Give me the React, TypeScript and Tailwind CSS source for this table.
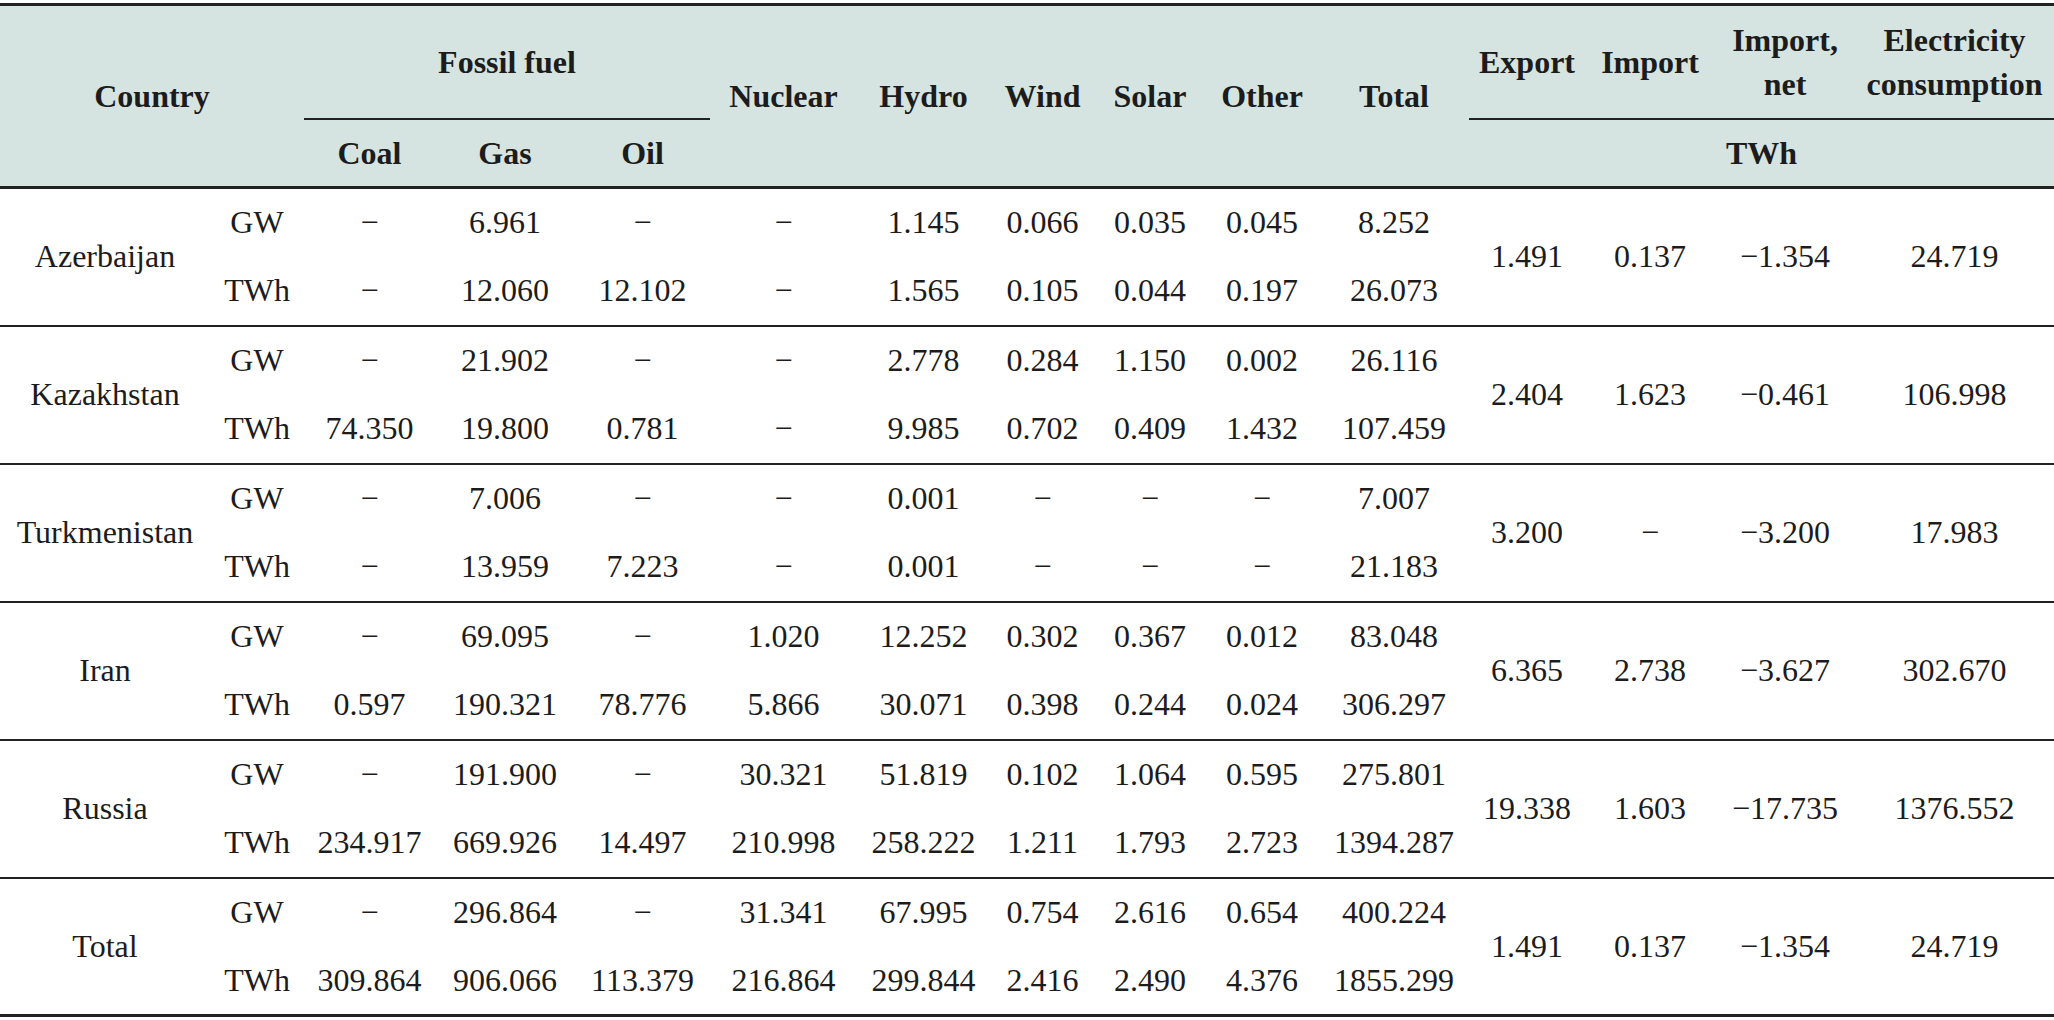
import React from "react";

const cols = [210, 94, 131, 140, 135, 147, 133, 105, 110, 114, 150, 116, 130, 140, 199];

const M = "\u2212";

type Row = {
  name: string;
  gw: string[];
  twh: string[];
  right: string[];
};

const rows: Row[] = [
  {
    name: "Azerbaijan",
    gw: [M, "6.961", M, M, "1.145", "0.066", "0.035", "0.045", "8.252"],
    twh: [M, "12.060", "12.102", M, "1.565", "0.105", "0.044", "0.197", "26.073"],
    right: ["1.491", "0.137", M + "1.354", "24.719"],
  },
  {
    name: "Kazakhstan",
    gw: [M, "21.902", M, M, "2.778", "0.284", "1.150", "0.002", "26.116"],
    twh: ["74.350", "19.800", "0.781", M, "9.985", "0.702", "0.409", "1.432", "107.459"],
    right: ["2.404", "1.623", M + "0.461", "106.998"],
  },
  {
    name: "Turkmenistan",
    gw: [M, "7.006", M, M, "0.001", M, M, M, "7.007"],
    twh: [M, "13.959", "7.223", M, "0.001", M, M, M, "21.183"],
    right: ["3.200", M, M + "3.200", "17.983"],
  },
  {
    name: "Iran",
    gw: [M, "69.095", M, "1.020", "12.252", "0.302", "0.367", "0.012", "83.048"],
    twh: ["0.597", "190.321", "78.776", "5.866", "30.071", "0.398", "0.244", "0.024", "306.297"],
    right: ["6.365", "2.738", M + "3.627", "302.670"],
  },
  {
    name: "Russia",
    gw: [M, "191.900", M, "30.321", "51.819", "0.102", "1.064", "0.595", "275.801"],
    twh: ["234.917", "669.926", "14.497", "210.998", "258.222", "1.211", "1.793", "2.723", "1394.287"],
    right: ["19.338", "1.603", M + "17.735", "1376.552"],
  },
  {
    name: "Total",
    gw: [M, "296.864", M, "31.341", "67.995", "0.754", "2.616", "0.654", "400.224"],
    twh: ["309.864", "906.066", "113.379", "216.864", "299.844", "2.416", "2.490", "4.376", "1855.299"],
    right: ["1.491", "0.137", M + "1.354", "24.719"],
  },
];

export default function App() {
  return (
    <div className="w-[2054px] h-[1020px] bg-white pt-[3px] overflow-hidden font-['Liberation_Serif','Times_New_Roman',serif] text-[#1c1c1c]">
      <table className="table-fixed w-[2054px] border-collapse text-[32px] leading-[35px]">
        <colgroup>
          {cols.map((w, i) => (
            <col key={i} style={{ width: w }} />
          ))}
        </colgroup>
        <thead className="bg-[#d6e4e1] font-bold leading-[44px]">
          <tr className="h-[114px] border-t-[3px] border-[#222]">
            <th rowSpan={2} colSpan={2} className="p-0 text-center align-middle">
              Country
            </th>
            <th colSpan={3} className="p-0 text-center align-middle border-b-2 border-[#222]">
              Fossil fuel
            </th>
            <th rowSpan={2} className="p-0 text-center align-middle">Nuclear</th>
            <th rowSpan={2} className="p-0 text-center align-middle">Hydro</th>
            <th rowSpan={2} className="p-0 text-center align-middle">Wind</th>
            <th rowSpan={2} className="p-0 text-center align-middle">Solar</th>
            <th rowSpan={2} className="p-0 text-center align-middle">Other</th>
            <th rowSpan={2} className="p-0 text-center align-middle">Total</th>
            <th className="p-0 text-center align-middle border-b-2 border-[#222]">Export</th>
            <th className="p-0 text-center align-middle border-b-2 border-[#222]">Import</th>
            <th className="p-0 text-center align-middle border-b-2 border-[#222]">
              Import,
              <br />
              net
            </th>
            <th className="p-0 text-center align-middle border-b-2 border-[#222]">
              Electricity
              <br />
              consumption
            </th>
          </tr>
          <tr className="h-[69px] border-b-[3px] border-[#222]">
            <th className="p-0 text-center align-middle">Coal</th>
            <th className="p-0 text-center align-middle">Gas</th>
            <th className="p-0 text-center align-middle">Oil</th>
            <th colSpan={4} className="p-0 text-center align-middle">TWh</th>
          </tr>
        </thead>
        <tbody className="font-normal">
          {rows.map((r, ri) => {
            const last = ri === rows.length - 1;
            return (
              <React.Fragment key={r.name}>
                <tr className="h-[69px]">
                  <td rowSpan={2} className="p-0 text-center align-middle">
                    {r.name}
                  </td>
                  <td className="p-0 text-center align-middle">GW</td>
                  {r.gw.map((v, i) => (
                    <td key={i} className="p-0 text-center align-middle">
                      {v}
                    </td>
                  ))}
                  {r.right.map((v, i) => (
                    <td key={"r" + i} rowSpan={2} className="p-0 text-center align-middle">
                      {v}
                    </td>
                  ))}
                </tr>
                <tr
                  className={
                    last
                      ? "h-[69px] border-b-[3px] border-[#222]"
                      : "h-[69px] border-b-2 border-[#222]"
                  }
                >
                  <td className="p-0 text-center align-middle">TWh</td>
                  {r.twh.map((v, i) => (
                    <td key={i} className="p-0 text-center align-middle">
                      {v}
                    </td>
                  ))}
                </tr>
              </React.Fragment>
            );
          })}
        </tbody>
      </table>
    </div>
  );
}
